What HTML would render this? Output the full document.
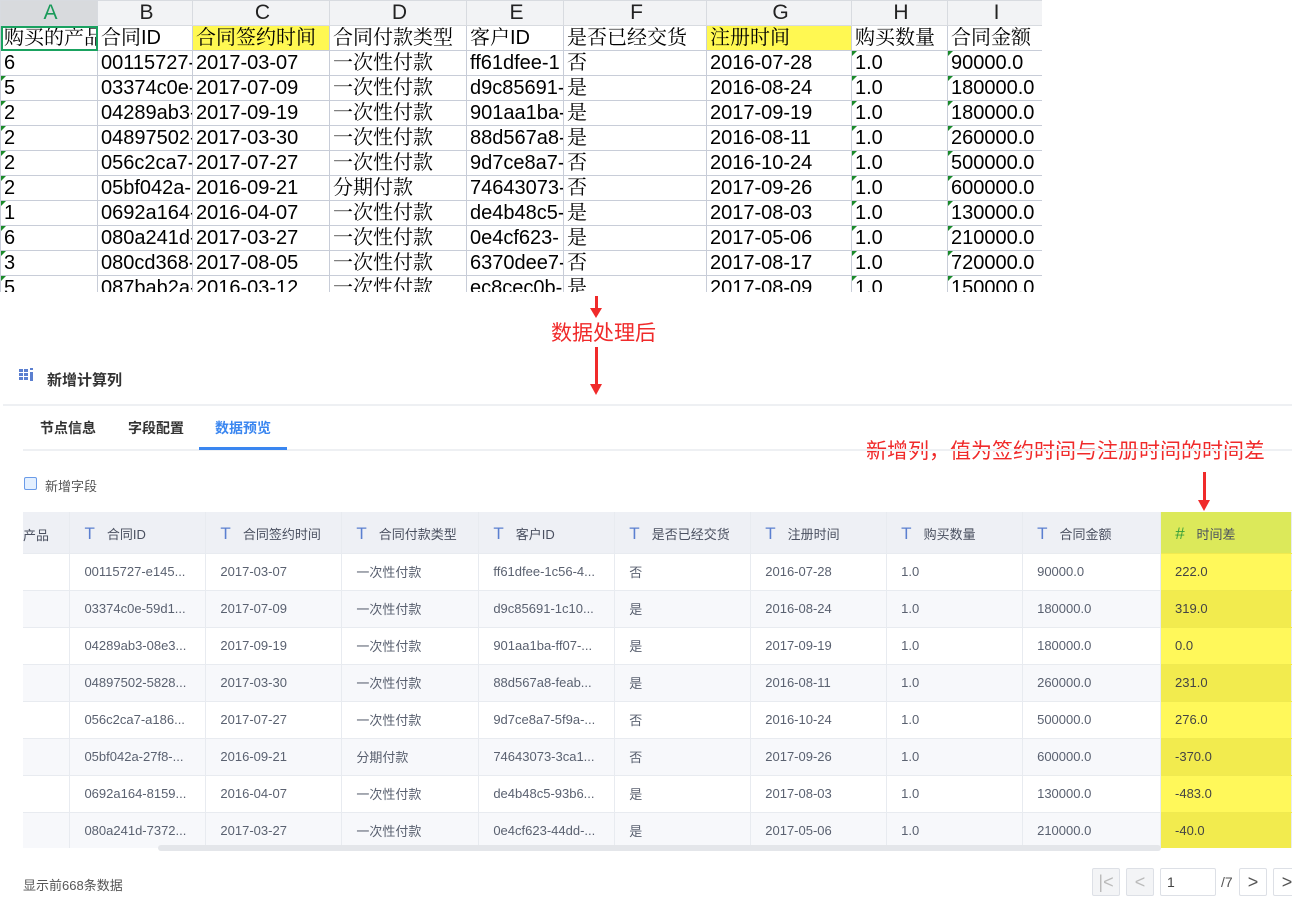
<!DOCTYPE html>
<html><head><meta charset="utf-8"><style>
*{margin:0;padding:0;box-sizing:border-box}
body{width:1292px;height:903px;background:#fff;position:relative;overflow:hidden;font-family:"Liberation Sans","Noto Sans CJK SC",sans-serif}
.ab{position:absolute}
.xl{position:absolute;left:0;top:0;width:1042px;height:292px;overflow:hidden}
.xl table{width:1042px;border-collapse:collapse;table-layout:fixed;font-family:"Liberation Sans","Noto Serif CJK SC",serif;font-size:20px;color:#000}
.xl td{border:1px solid #c8cdd8;height:25px;padding:0 0 0 3px;white-space:nowrap;overflow:hidden;line-height:24px;position:relative}
.xl tr.h td{height:24px;background:#f2f3f5;text-align:center;font-family:"Liberation Sans",sans-serif;font-size:21px;color:#222;border-color:#d8dbe0}
.y{background:#fff852}
.tri::before{content:"";position:absolute;left:0;top:0;border-top:5px solid #1a8a2a;border-right:5px solid transparent}
.grid{position:absolute;left:23px;top:512px;width:1269px;height:336px;overflow:hidden}
.grid table{border-collapse:collapse;table-layout:fixed;font-size:13px;color:#5a6170}
.grid td{height:37px;padding-left:14px;border-right:1px solid #e8ebf0;border-bottom:1px solid #e8ebf0;white-space:nowrap;overflow:hidden}
.grid tr.hd td{height:41px;background:#eef0f5;color:#4a5060;padding-top:4px}
.grid tr:nth-child(odd):not(.hd) td{background:#f7f8fb}
.grid td.z{background:#fff85a!important;color:#444;border-bottom-color:#f0ea50}
.grid tr:nth-child(odd):not(.hd) td.z{background:#f2eb4e!important}
.grid tr.hd td.z{background:#dce95a!important}
.T{color:#5b7fd0;font-size:17px;margin-right:12px;font-family:"Liberation Sans",sans-serif}
.red{color:#f02a2a}
.pb{position:absolute;top:868px;width:28px;height:28px;border:1px solid #dde0e6;border-radius:2px;background:#fff;color:#555;text-align:center;line-height:26px;font-size:18px}
</style></head><body>
<div class="xl"><table>
<colgroup><col style="width:97px"><col style="width:95px"><col style="width:137px"><col style="width:137px"><col style="width:97px"><col style="width:143px"><col style="width:145px"><col style="width:96px"><col style="width:95px"></colgroup>
<tr class="h"><td style="background:#d8dadd;color:#1a9a5a">A</td><td>B</td><td>C</td><td>D</td><td>E</td><td>F</td><td>G</td><td>H</td><td>I</td></tr>
<tr><td style="outline:2px solid #1aa260;outline-offset:-2px">购买的产品</td><td>合同ID</td><td class="y">合同签约时间</td><td>合同付款类型</td><td>客户ID</td><td>是否已经交货</td><td class="y">注册时间</td><td>购买数量</td><td>合同金额</td></tr>
<tr><td>6</td><td>00115727-</td><td>2017-03-07</td><td>一次性付款</td><td>ff61dfee-1</td><td>否</td><td>2016-07-28</td><td class="tri">1.0</td><td class="tri">90000.0</td></tr>
<tr><td class="tri">5</td><td>03374c0e-</td><td>2017-07-09</td><td>一次性付款</td><td>d9c85691-</td><td>是</td><td>2016-08-24</td><td class="tri">1.0</td><td class="tri">180000.0</td></tr>
<tr><td class="tri">2</td><td>04289ab3-</td><td>2017-09-19</td><td>一次性付款</td><td>901aa1ba-</td><td>是</td><td>2017-09-19</td><td class="tri">1.0</td><td class="tri">180000.0</td></tr>
<tr><td class="tri">2</td><td>04897502-</td><td>2017-03-30</td><td>一次性付款</td><td>88d567a8-</td><td>是</td><td>2016-08-11</td><td class="tri">1.0</td><td class="tri">260000.0</td></tr>
<tr><td class="tri">2</td><td>056c2ca7-</td><td>2017-07-27</td><td>一次性付款</td><td>9d7ce8a7-</td><td>否</td><td>2016-10-24</td><td class="tri">1.0</td><td class="tri">500000.0</td></tr>
<tr><td class="tri">2</td><td>05bf042a-</td><td>2016-09-21</td><td>分期付款</td><td>74643073-</td><td>否</td><td>2017-09-26</td><td class="tri">1.0</td><td class="tri">600000.0</td></tr>
<tr><td class="tri">1</td><td>0692a164-</td><td>2016-04-07</td><td>一次性付款</td><td>de4b48c5-</td><td>是</td><td>2017-08-03</td><td class="tri">1.0</td><td class="tri">130000.0</td></tr>
<tr><td class="tri">6</td><td>080a241d-</td><td>2017-03-27</td><td>一次性付款</td><td>0e4cf623-</td><td>是</td><td>2017-05-06</td><td class="tri">1.0</td><td class="tri">210000.0</td></tr>
<tr><td class="tri">3</td><td>080cd368-</td><td>2017-08-05</td><td>一次性付款</td><td>6370dee7-</td><td>否</td><td>2017-08-17</td><td class="tri">1.0</td><td class="tri">720000.0</td></tr>
<tr><td class="tri">5</td><td>087bab2a-</td><td>2016-03-12</td><td>一次性付款</td><td>ec8cec0b-</td><td>是</td><td>2017-08-09</td><td class="tri">1.0</td><td class="tri">150000.0</td></tr>
</table></div>

<div class="ab" style="left:595px;top:296px;width:3px;height:14px;background:#f02a2a"></div>
<div class="ab" style="left:590px;top:308px;border-left:6px solid transparent;border-right:6px solid transparent;border-top:10px solid #f02a2a"></div>
<div class="ab red" style="left:551px;top:317px;font-size:21px">数据处理后</div>
<div class="ab" style="left:595px;top:347px;width:3px;height:38px;background:#f02a2a"></div>
<div class="ab" style="left:590px;top:384px;border-left:6px solid transparent;border-right:6px solid transparent;border-top:11px solid #f02a2a"></div>
<div class="ab red" style="left:866px;top:435px;font-size:21px;white-space:nowrap">新增列，值为签约时间与注册时间的时间差</div>
<div class="ab" style="left:1203px;top:472px;width:3px;height:30px;background:#f02a2a"></div>
<div class="ab" style="left:1198px;top:500px;border-left:6px solid transparent;border-right:6px solid transparent;border-top:11px solid #f02a2a"></div>

<svg class="ab" style="left:19px;top:368px" width="16" height="16"><g fill="#5b7fd0"><rect x="0" y="1" width="4" height="3"/><rect x="5" y="1" width="4" height="3"/><rect x="0" y="5" width="4" height="3"/><rect x="5" y="5" width="4" height="3"/><rect x="0" y="9" width="4" height="3"/><rect x="5" y="9" width="4" height="3"/><rect x="11" y="0" width="3" height="2"/><rect x="11" y="4" width="3" height="9"/></g></svg>
<div class="ab" style="left:47px;top:369px;font-size:15px;font-weight:bold;color:#333">新增计算列</div>
<div class="ab" style="left:3px;top:404px;width:1289px;height:2px;background:#eef0f3"></div>
<div class="ab" style="left:40px;top:418px;font-size:14px;font-weight:bold;color:#333">节点信息</div>
<div class="ab" style="left:128px;top:418px;font-size:14px;font-weight:bold;color:#333">字段配置</div>
<div class="ab" style="left:215px;top:418px;font-size:14px;font-weight:bold;color:#3a86f0">数据预览</div>
<div class="ab" style="left:23px;top:449px;width:1269px;height:2px;background:#eef0f3"></div>
<div class="ab" style="left:199px;top:447px;width:88px;height:3px;background:#3a86f0"></div>
<div class="ab" style="left:24px;top:477px;width:13px;height:13px;border:1px solid #6a9be8;border-radius:2px;background:#e4f0ff"></div>
<div class="ab" style="left:45px;top:476px;font-size:13px;color:#555">新增字段</div>

<div class="grid"><table>
<colgroup><col style="width:47px"><col style="width:136px"><col style="width:136px"><col style="width:137px"><col style="width:136px"><col style="width:136px"><col style="width:136px"><col style="width:136px"><col style="width:138px"><col style="width:131px"></colgroup>
<tr class="hd"><td style="padding-left:0">产品</td><td><span class="T">T</span>合同ID</td><td><span class="T">T</span>合同签约时间</td><td><span class="T">T</span>合同付款类型</td><td><span class="T">T</span>客户ID</td><td><span class="T">T</span>是否已经交货</td><td><span class="T">T</span>注册时间</td><td><span class="T">T</span>购买数量</td><td><span class="T">T</span>合同金额</td><td class="z"><span class="T" style="color:#3aa03a;font-style:italic">#</span>时间差</td></tr>
<tr><td></td><td>00115727-e145...</td><td>2017-03-07</td><td>一次性付款</td><td>ff61dfee-1c56-4...</td><td>否</td><td>2016-07-28</td><td>1.0</td><td>90000.0</td><td class="z">222.0</td></tr>
<tr><td></td><td>03374c0e-59d1...</td><td>2017-07-09</td><td>一次性付款</td><td>d9c85691-1c10...</td><td>是</td><td>2016-08-24</td><td>1.0</td><td>180000.0</td><td class="z">319.0</td></tr>
<tr><td></td><td>04289ab3-08e3...</td><td>2017-09-19</td><td>一次性付款</td><td>901aa1ba-ff07-...</td><td>是</td><td>2017-09-19</td><td>1.0</td><td>180000.0</td><td class="z">0.0</td></tr>
<tr><td></td><td>04897502-5828...</td><td>2017-03-30</td><td>一次性付款</td><td>88d567a8-feab...</td><td>是</td><td>2016-08-11</td><td>1.0</td><td>260000.0</td><td class="z">231.0</td></tr>
<tr><td></td><td>056c2ca7-a186...</td><td>2017-07-27</td><td>一次性付款</td><td>9d7ce8a7-5f9a-...</td><td>否</td><td>2016-10-24</td><td>1.0</td><td>500000.0</td><td class="z">276.0</td></tr>
<tr><td></td><td>05bf042a-27f8-...</td><td>2016-09-21</td><td>分期付款</td><td>74643073-3ca1...</td><td>否</td><td>2017-09-26</td><td>1.0</td><td>600000.0</td><td class="z">-370.0</td></tr>
<tr><td></td><td>0692a164-8159...</td><td>2016-04-07</td><td>一次性付款</td><td>de4b48c5-93b6...</td><td>是</td><td>2017-08-03</td><td>1.0</td><td>130000.0</td><td class="z">-483.0</td></tr>
<tr><td></td><td>080a241d-7372...</td><td>2017-03-27</td><td>一次性付款</td><td>0e4cf623-44dd-...</td><td>是</td><td>2017-05-06</td><td>1.0</td><td>210000.0</td><td class="z">-40.0</td></tr>
</table></div>
<div class="ab" style="left:158px;top:845px;width:1003px;height:6px;background:#e4e6ea;border-radius:3px"></div>
<div class="ab" style="left:23px;top:875px;font-size:13px;color:#555">显示前668条数据</div>
<div class="pb" style="left:1092px;background:#f3f4f6;color:#bbb">|&lt;</div>
<div class="pb" style="left:1126px;background:#f3f4f6;color:#bbb">&lt;</div>
<div class="pb" style="left:1160px;width:56px;text-align:left;padding-left:6px;font-size:14px;color:#444">1</div>
<div class="ab" style="left:1221px;top:874px;font-size:14px;color:#555">/7</div>
<div class="pb" style="left:1239px">&gt;</div>
<div class="pb" style="left:1273px">&gt;</div>
</body></html>
